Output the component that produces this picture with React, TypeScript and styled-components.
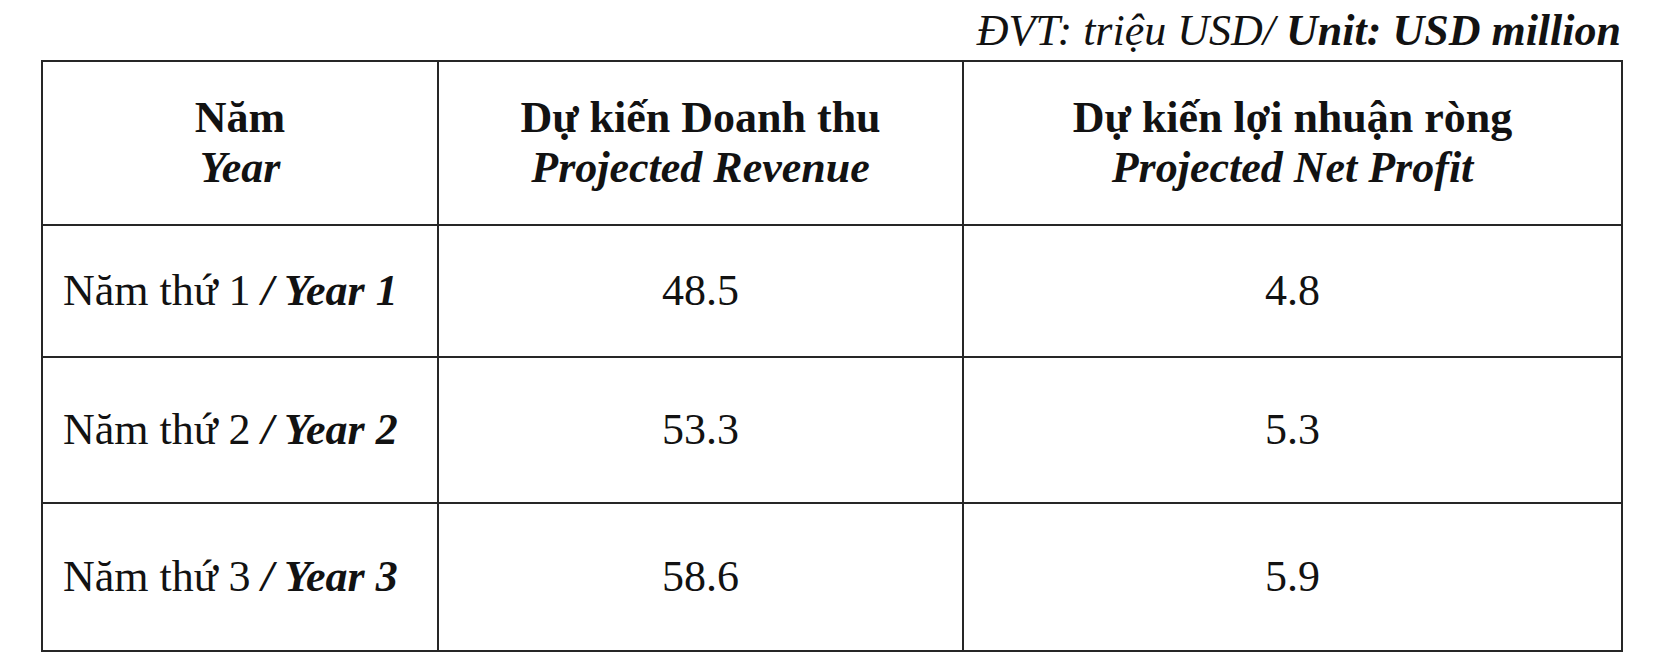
import React from 'react';
import styled, {createGlobalStyle} from "styled-components";

const GlobalStyle = createGlobalStyle`
    html, body {
        margin: 0;
        padding: 0;
        background: #ffffff;
    }

    body {
        font-family: "Liberation Serif", "Times New Roman", serif;
        color: #121212;
    }
`

type Row = {
    index: number
    revenue: string
    profit: string
    height: number
}

const rows: Row[] = [
    {index: 1, revenue: '48.5', profit: '4.8', height: 132},
    {index: 2, revenue: '53.3', profit: '5.3', height: 146},
    {index: 3, revenue: '58.6', profit: '5.9', height: 148},
]

export default function App() {
    return (
        <>
            <GlobalStyle/>
            <StyledPage>
                <Caption>
                    <i>ĐVT: triệu USD/ </i><BoldItalic>Unit: USD million</BoldItalic>
                </Caption>
                <Table>
                    <colgroup>
                        <col style={{width: 396}}/>
                        <col style={{width: 525}}/>
                        <col style={{width: 659}}/>
                    </colgroup>
                    <thead>
                    <tr>
                        <HeadCell>
                            <b>Năm</b><br/><BoldItalic>Year</BoldItalic>
                        </HeadCell>
                        <HeadCell>
                            <b>Dự kiến Doanh thu</b><br/><BoldItalic>Projected Revenue</BoldItalic>
                        </HeadCell>
                        <HeadCell>
                            <b>Dự kiến lợi nhuận ròng</b><br/><BoldItalic>Projected Net Profit</BoldItalic>
                        </HeadCell>
                    </tr>
                    </thead>
                    <tbody>
                    {rows.map(row => (
                        <BodyRow key={row.index} $height={row.height}>
                            <YearCell>
                                Năm thứ {row.index} <BoldItalic>/ Year {row.index}</BoldItalic>
                            </YearCell>
                            <ValueCell>{row.revenue}</ValueCell>
                            <ValueCell>{row.profit}</ValueCell>
                        </BodyRow>
                    ))}
                    </tbody>
                </Table>
            </StyledPage>
        </>
    );
}

const StyledPage = styled.div`
    width: 1655px;
    height: 665px;
    box-sizing: border-box;
    padding: 6px 0 0 41px;
    overflow: hidden;
`

const Caption = styled.div`
    width: 1580px;
    text-align: right;
    font-size: 44px;
    line-height: 50px;
    margin-bottom: 4px;
    white-space: nowrap;
`

const Table = styled.table`
    width: 1580px;
    table-layout: fixed;
    border-collapse: collapse;
    font-family: "Liberation Serif", "Times New Roman", serif;
    font-size: 44px;
    line-height: 50px;
    color: #121212;

    td, th {
        border: 2px solid #262626;
        padding: 0;
    }
`

const HeadCell = styled.th`
    height: 162px;
    text-align: center;
    vertical-align: middle;
    font-weight: 400;

    b {
        font-weight: 700;
    }
`

const BoldItalic = styled.span`
    font-weight: 700;
    font-style: italic;
`

const BodyRow = styled.tr<{ $height: number }>`
    height: ${props => props.$height}px;
`

const YearCell = styled.td`
    text-align: left;
    padding-left: 20px !important;
    white-space: nowrap;
`

const ValueCell = styled.td`
    text-align: center;
`
